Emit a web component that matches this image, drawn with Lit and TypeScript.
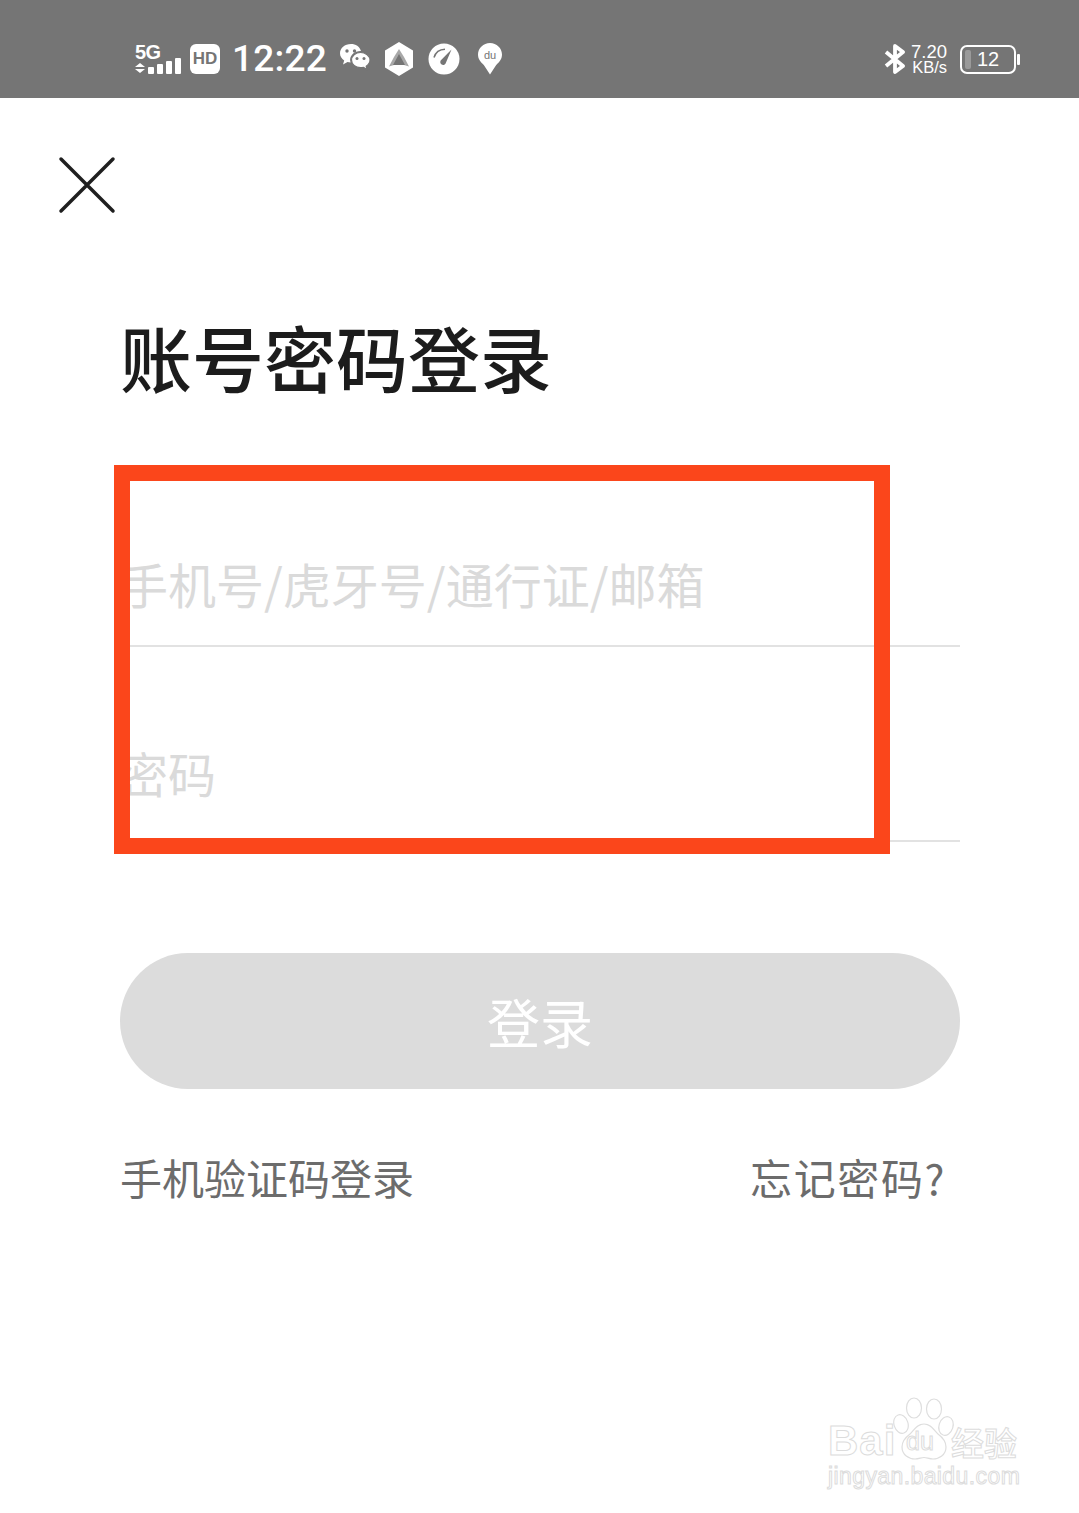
import { LitElement, html, css, svg } from "lit";
import { customElement } from "lit/decorators.js";

const wechat = svg`<svg class="ic" width="32" height="34" viewBox="0 0 32 34">
<path fill="#fff" d="M12 2C5.600 2 1 6.200 1 11.200c0 3 1.600 5.500 4.200 7.200L4 22.500l4.500-2.400c1 .3 2 .4 3.100.5-.3-1-.5-1.900-.5-2.800 0-5 4.700-8.900 10.300-8.900h.6C20.700 4.700 16.700 2 12 2z"/>
<circle cx="8" cy="9" r="1.700" fill="#757575"/><circle cx="15.500" cy="9" r="1.700" fill="#757575"/>
<path fill="#fff" stroke="#757575" stroke-width="1.200" d="M21.500 10.500c-5 0-9 3.400-9 7.600s4 7.600 9 7.600c1 0 2-.1 3-.4l3.600 2.300-.9-3.400c2.300-1.400 3.800-3.600 3.800-6.100 0-4.200-4.500-7.600-9.500-7.600z"/>
<circle cx="18" cy="16.500" r="1.500" fill="#757575"/><circle cx="25" cy="16.500" r="1.500" fill="#757575"/></svg>`;

const hexagon = svg`<svg class="ic" width="30" height="34" viewBox="0 0 30 34">
<path fill="#fff" d="M15 0l14 8.500v17L15 34 1 25.500v-17z"/>
<path fill="#a8a8a8" d="M15 7l5 8 5 9.500-10-3-10 3 5-9.500z"/><path fill="#757575" d="M15 12l6 11H9z"/></svg>`;

const gauge = svg`<svg class="ic" width="32" height="32" viewBox="0 0 32 32">
<circle cx="16" cy="16" r="15.500" fill="#fff"/>
<path fill="none" stroke="#757575" stroke-width="1.500" d="M6 14.500C7.500 9.500 12 6.500 17 6.300"/>
<path fill="#757575" d="M23.500 6.500L18 19.500a2.900 2.900 0 1 1-4.600-2.800z"/></svg>`;

const duPin = svg`<svg class="ic" width="24" height="32" viewBox="0 0 24 32">
<path fill="#fff" d="M12 0C5.400 0 0 5.200 0 11.600c0 4.500 2.500 7.600 5.800 10.400L12 31.500l6.200-9.500C21.500 19.200 24 16.100 24 11.600 24 5.200 18.600 0 12 0z"/></svg>`;

const bluetooth = svg`<svg class="ic" width="22" height="30" viewBox="0 0 22 30">
<path fill="none" stroke="#fff" stroke-width="3.800" stroke-linejoin="round" d="M2 8l17 14-8 6V2l8 6L2 22"/></svg>`;

const paw = svg`<svg class="paw" width="62" height="64" viewBox="0 0 62 64" fill="#fff" stroke="#dedede" stroke-width="1.200">
<ellipse cx="21" cy="11" rx="7.500" ry="10"/><ellipse cx="41" cy="12" rx="7.500" ry="10"/>
<ellipse cx="8" cy="27" rx="7" ry="9.500" transform="rotate(-18 8 27)"/><ellipse cx="53" cy="29" rx="7" ry="9.500" transform="rotate(18 53 29)"/>
<path d="M31 27c-7 0-10 6-14 10-4 3-8 7-8 13 0 8 7 12 13 12 4 0 6-1.500 9-1.500s5 1.500 9 1.500c6 0 13-4 13-12 0-6-4-10-8-13-4-4-7-10-14-10z"/></svg>`;

@customElement("app-root")
export class AppRoot extends LitElement {
  static styles = css`
    :host {
      display: block;
      position: relative;
      width: 1079px;
      height: 1513px;
      background: #fff;
      overflow: hidden;
      font-family: "Noto Sans CJK SC", "Noto Sans", sans-serif;
    }
    .status {
      height: 98px;
      box-sizing: border-box;
      padding: 20px 59px 0 135px;
      background: #757575;
      color: #fff;
      display: flex;
      align-items: center;
      justify-content: space-between;
    }
    .left, .right { display: flex; align-items: center; }
    .ic { display: block; flex: none; }
    .net { width: 48px; height: 30px; display: grid; grid-template-columns: 13px 1fr; grid-template-rows: 15px 15px; }
    .five { grid-column: 1 / 3; font: 700 20px/16px "Liberation Sans", sans-serif; letter-spacing: -0.5px; }
    .arrows { display: flex; flex-direction: column; gap: 2px; justify-content: flex-end; padding-bottom: 1px; }
    .up { width: 0; height: 0; border: 5px solid transparent; border-top: 0; border-bottom: 4px solid #fff; }
    .down { width: 0; height: 0; border: 5px solid transparent; border-bottom: 0; border-top: 4px solid #fff; }
    .bars { grid-column: 2; margin-top: -3px; display: flex; align-items: flex-end; gap: 3px; height: 18px; }
    .bars i { display: block; width: 6px; background: #fff; border-radius: 1px; }
    .hd {
      margin-left: 7px;
      width: 30px; height: 30px;
      border-radius: 6px;
      background: #fff;
      color: #757575;
      font: 700 17px/30px "Liberation Sans", sans-serif;
      text-align: center;
    }
    .time {
      margin-left: 12px;
      width: 96px;
      font: 500 37px/40px Roboto, sans-serif;
      letter-spacing: 0.2px;
      white-space: nowrap;
    }
    .wc { margin-left: 11px; }
    .hx { margin-left: 13px; }
    .gg { margin-left: 14px; }
    .du { margin-left: 18px; position: relative; width: 24px; }
    .du span { position: absolute; left: 0; right: 0; top: 6px; text-align: center; color: #757575; font: 400 11px/13px "Liberation Sans", sans-serif; }
    .speed { margin-left: 5px; width: 36px; text-align: right; font-family: "Liberation Sans", sans-serif; }
    .speed b { display: block; font-weight: 400; font-size: 18.500px; line-height: 17px; }
    .speed small { display: block; font-size: 16.500px; line-height: 15px; white-space: nowrap; }
    .batt {
      margin-left: 13px;
      width: 56px; height: 29px;
      box-sizing: border-box;
      border: 2.500px solid #fff;
      border-radius: 7px;
      position: relative;
      font: 400 20px/24px "Liberation Sans", sans-serif;
      text-align: center;
    }
    .batt::before {
      content: "";
      position: absolute; left: 3px; top: 3px; bottom: 3px; width: 6px;
      background: #9a9a9a; border-radius: 2px;
    }
    .nub { width: 3px; height: 11px; margin-left: 1px; background: #fff; border-radius: 1px; }

    .close { display: block; margin: 57px 0 0 57px; }
    .form { padding: 0 119px 0 120px; }
    h1 {
      margin: 89px 0 0 0;
      font-size: 72px;
      line-height: 104px;
      font-weight: 500;
      color: #1c1c1c;
      white-space: nowrap;
    }
    .field {
      border-bottom: 2px solid #e2e2e2;
      color: #dadada;
      font-size: 48px;
      white-space: nowrap;
      font-weight: 400;
      box-sizing: border-box;
    }
    .f1 { margin-top: 79px; height: 160px; line-height: 74px; padding-top: 59px; }
    .f2 { height: 195px; line-height: 70px; padding-top: 90px; }
    .btn {
      margin-top: 111px;
      height: 136px;
      border-radius: 68px;
      background: #dcdcdc;
      color: #fff;
      font-size: 53px;
      line-height: 136px;
      text-align: center;
      font-weight: 400;
    }
    .links {
      margin-top: 58px;
      padding: 0 14px 0 0;
      display: flex;
      justify-content: space-between;
      font-size: 42px;
      line-height: 60px;
      color: #6c6c6c;
      font-weight: 400;
    }
    .forgot { letter-spacing: 1.6px; }
    .frame {
      position: absolute;
      left: 114px; top: 465px;
      width: 776px; height: 389px;
      box-sizing: border-box;
      border: 16px solid #fb461b;
    }
    .mark { position: absolute; left: 827px; top: 1397px; width: 200px; height: 96px; }
    .mark .paw { position: absolute; left: 66px; top: 0; }
    .mark span { position: absolute; color: #fff; -webkit-text-stroke: 1px #dcdcdc; white-space: nowrap; }
    .bai { left: 1px; top: 20px; font: 700 42px/48px "Liberation Sans", sans-serif; letter-spacing: 1px; }
    .pdu { left: 79px; top: 29px; font: 400 25px/30px "Liberation Sans", sans-serif; }
    .jy { left: 124px; top: 25px; font-size: 33px; line-height: 40px; font-weight: 500; }
    .url { left: 1px; top: 66px; font: 400 23px/26px "Liberation Sans", sans-serif; letter-spacing: 0.4px; }
  `;

  render() {
    return html`
      <div class="status">
        <div class="left">
          <div class="net">
            <div class="five">5G</div>
            <div class="arrows"><div class="up"></div><div class="down"></div></div>
            <div class="bars">
              <i style="height:7px"></i><i style="height:10px"></i><i style="height:13px"></i><i style="height:16px"></i>
            </div>
          </div>
          <div class="hd">HD</div>
          <div class="time">12:22</div>
          <div class="wc">${wechat}</div>
          <div class="hx">${hexagon}</div>
          <div class="gg">${gauge}</div>
          <div class="du">${duPin}<span>du</span></div>
        </div>
        <div class="right">
          ${bluetooth}
          <div class="speed"><b>7.20</b><small>KB/s</small></div>
          <div class="batt">12</div>
          <div class="nub"></div>
        </div>
      </div>
      <svg class="close" width="60" height="60" viewBox="0 0 60 60" fill="none" stroke="#1f1f1f" stroke-width="3.500" stroke-linecap="round">
        <path d="M4 4l52 52M56 4L4 56" />
      </svg>
      <div class="form">
        <h1>账号密码登录</h1>
        <div class="field f1">手机号/虎牙号/通行证/邮箱</div>
        <div class="field f2">密码</div>
        <div class="btn">登录</div>
        <div class="links"><span>手机验证码登录</span><span class="forgot">忘记密码?</span></div>
      </div>
      <div class="frame"></div>
      <div class="mark">
        ${paw}
        <span class="bai">Bai</span>
        <span class="pdu">du</span>
        <span class="jy">经验</span>
        <span class="url">jingyan.baidu.com</span>
      </div>
    `;
  }
}
